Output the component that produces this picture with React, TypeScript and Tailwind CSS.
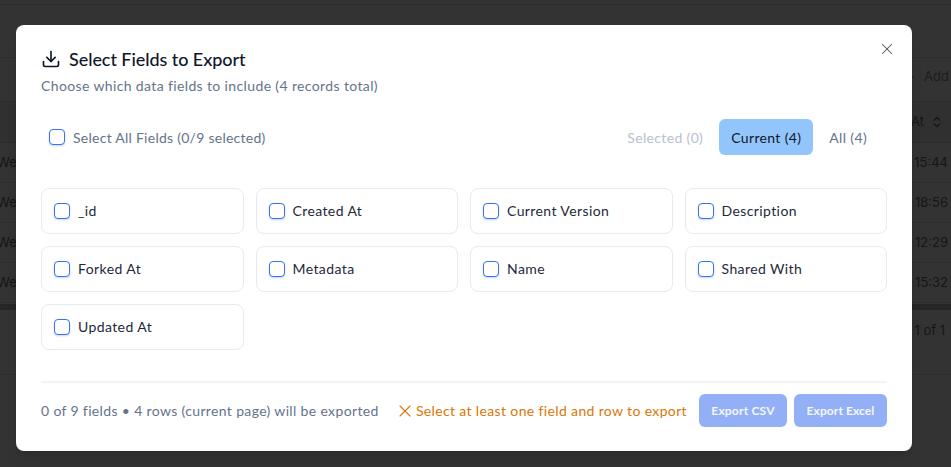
import React from 'react';
import { ChevronsUpDown, Download, Plus, X } from 'lucide-react';

const fields = ['_id', 'Created At', 'Current Version', 'Description', 'Forked At', 'Metadata', 'Name', 'Shared With', 'Updated At'];

const Box = () => (
  <span className="block size-[16px] shrink-0 rounded-[4px] border border-[#3b72f0] bg-white shadow-[0_1px_2px_rgba(59,114,240,0.3)]" />
);

// table behind the overlay, only its edges show
const Backdrop = () => (
  <div className="absolute inset-0 flex flex-col bg-[#333333] font-['Inter',sans-serif] text-[13px] text-[#161616]">
    <div className="h-[5px] border-b border-[#2d2d2d]" />
    <div className="h-[53px] border-b border-[#2d2d2d]" />
    <div className="flex h-[44px] items-center justify-end gap-[8px] border-b border-[#2d2d2d] pr-[2px] pb-[6px] text-[#1c1c1c]">
      <Plus size={12} />
      <span>Add</span>
    </div>
    <div className="flex h-[41px] items-center justify-end gap-[6px] border-b border-[#2d2d2d] bg-[#303030] pr-[7px]">
      <span>At</span>
      <ChevronsUpDown size={14} />
    </div>
    {['15:44', '18:56', '12:29', '15:32'].map((t) => (
      <div key={t} className="flex h-[40px] items-center justify-between border-b border-[#2d2d2d] pt-[1px]">
        <span className="ml-[-3px]">We</span>
        <span className="pr-[3px]">{t}</span>
      </div>
    ))}
    <div className="mt-[1px] h-[6px] bg-[#262626]" />
    <div className="flex h-[65px] items-center justify-end border-b border-[#2d2d2d] pr-[6px] pb-[23px]">1 of 1</div>
  </div>
);

export default function App() {
  return (
    <div className="relative h-[467px] w-[951px] overflow-hidden font-['Lato',sans-serif]">
      <Backdrop />
      <div className="absolute top-[25px] left-[16px] h-[426px] w-[896px] rounded-[8px] bg-white px-[25px] pt-[24px] shadow-lg">
        <button className="absolute top-[15px] right-[16px] text-[#4b5563]">
          <X size={18} strokeWidth={1.4} />
        </button>
        <div className="flex items-center gap-[8px] text-[18px] font-medium leading-[20px] text-[#0f172a]">
          <Download size={20} strokeWidth={2} />
          <span className="tracking-[-0.06px]">Select Fields to Export</span>
        </div>
        <p className="mt-[7px] text-[14px] leading-[20px] tracking-[0.37px] text-[#64748b]">
          Choose which data fields to include (4 records total)
        </p>

        <div className="mt-[23px] flex h-[36px] items-center justify-between">
          <label className="flex items-center gap-[8px] pl-[8px] text-[14px] tracking-[0.26px] text-[#64748b]">
            <Box />
            Select All Fields (0/9 selected)
          </label>
          <div className="mr-[8px] flex items-center gap-[4px] text-[14px] tracking-[0.35px]">
            <span className="px-[12px] text-[#b9c1ce]">Selected (0)</span>
            <span className="flex h-[36px] items-center rounded-[6px] bg-[#93c5fd] px-[12px] text-[#0f172a]">Current (4)</span>
            <span className="px-[12px] text-[#64748b]">All (4)</span>
          </div>
        </div>

        <div className="mt-[33px] grid grid-cols-4 gap-x-[12px] gap-y-[12px]">
          {fields.map((f) => (
            <label key={f} className="flex h-[46px] items-center gap-[8px] rounded-[8px] border border-[#e5eaf3] pl-[12px] text-[14px] tracking-[0.4px] text-[#1e293b]">
              <Box />
              <span className="pb-[2px]">{f}</span>
            </label>
          ))}
        </div>

        <div className="mt-[31px] flex items-center justify-between border-t-2 border-[#f1f5f9] pt-[11px]">
          <span className="text-[14px] tracking-[0.35px] text-[#64748b]">0 of 9 fields • 4 rows (current page) will be exported</span>
          <div className="flex items-center">
            <span className="mr-[12px] flex items-center gap-[1px] text-[14px] tracking-[0.36px] text-[#d97706]">
              <X size={20} strokeWidth={1.3} />
              Select at least one field and row to export
            </span>
            <button className="h-[33px] w-[88px] rounded-[6px] bg-[#93aff5] text-[12px] font-bold tracking-[0.2px] text-white/90">Export CSV</button>
            <button className="ml-[7px] h-[33px] w-[93px] rounded-[6px] bg-[#93aff5] text-[12px] font-bold tracking-[0.1px] text-white/90">Export Excel</button>
          </div>
        </div>
      </div>
    </div>
  );
}
